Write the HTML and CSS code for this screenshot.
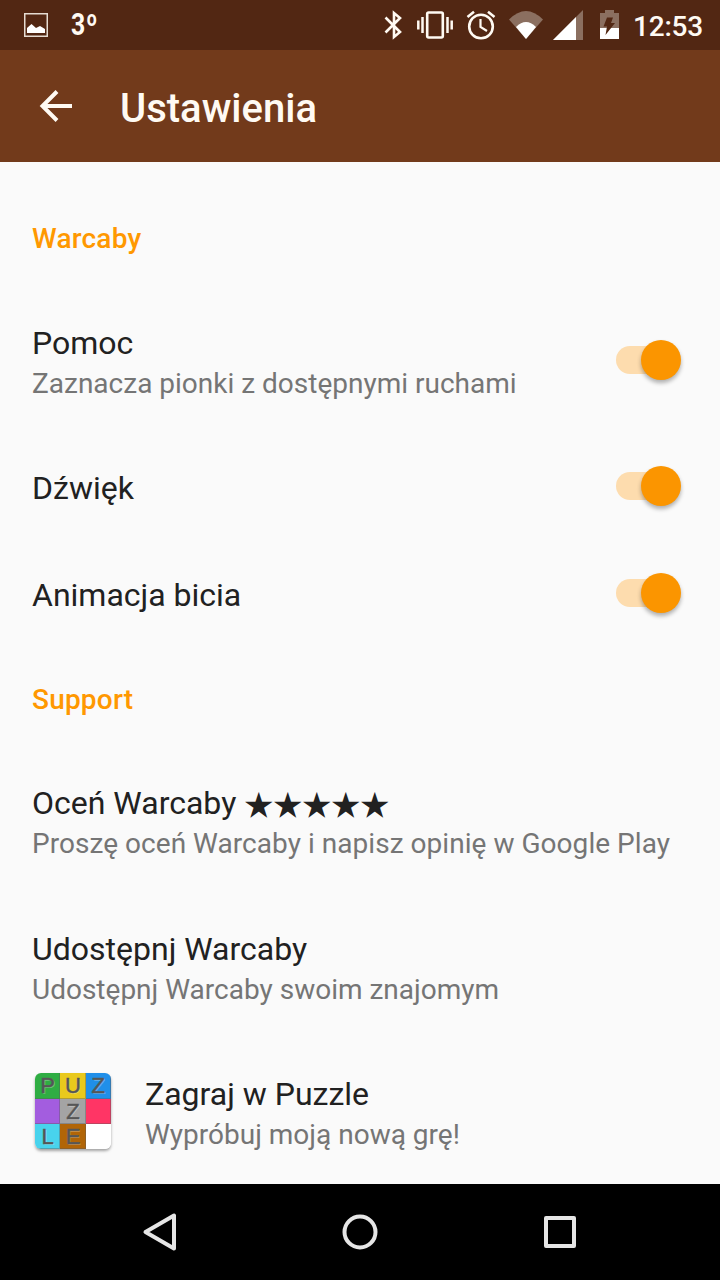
FILE: index.html
```html
<!DOCTYPE html>
<html lang="pl">
<head>
<meta charset="utf-8">
<title>Ustawienia</title>
<link rel="stylesheet" href="styles.css">
</head>
<body>
<div class="screen">
  <div class="statusbar">
    <svg class="status-picture" width="24" height="24" viewBox="0 0 24 24"><rect x=".75" y=".75" width="22.5" height="22.5" fill="none" stroke="#e6dcd2" stroke-width="1.5"/><path d="M3 20v-5l4.500-4 4.500 4 4-2 5 3v4z" fill="#fff"/></svg>
    <span class="temp">3<span class="degree">o</span></span>
    <svg class="status-icons" width="250" height="50" viewBox="370 0 250 50">
      <g fill="none" stroke="#fffaf3" stroke-width="2.600">
        <path d="M385.500 17.500 400 32l-6 5V13l6 5-14.500 14.500"/>
        <rect x="427.200" y="12.500" width="15.600" height="25" rx="1.500"/>
        <path d="M422.500 17v16M447.500 17v16M418.300 20.500v9M451.700 20.500v9" stroke-width="2.500"/>
        <circle cx="481" cy="26.500" r="11.800"/>
        <path d="M480.500 19v8l6.500 4" stroke-width="2.200"/>
        <path d="m467.500 17 6.500-5.200M494.500 17l-6.500-5.200"/>
      </g>
      <path d="M509 19.500q17-17 34 0L526 39z" fill="#8b6f60"/>
      <path d="M516 27q10-10 20 0L526 39z" fill="#fff"/>
      <path d="M583 10v30h-30z" fill="#8b6f60"/>
      <path d="M576 17v23h-23z" fill="#fff"/>
      <path d="M600 13h5v-3h9v3h5v16h-19z" fill="#8b6f60"/>
      <path d="M600 28h19v11h-19z" fill="#fff"/>
      <path d="M607 17.500h6l-2 5.500h4L605.500 35l1.500-8.500h-3.500z" fill="#522713"/>
    </svg>
    <span class="clock">12:53</span>
  </div>
  <header class="appbar">
    <svg class="back" width="34" height="34" viewBox="0 0 34 34"><path d="M33 17H4M18 2.500 3.500 17 18 31.500" fill="none" stroke="#fffaf3" stroke-width="4"/></svg>
    <h1 class="appbar-title">Ustawienia</h1>
  </header>
  <main class="list">
    <h2 class="category">Warcaby</h2>
    <div class="row">
      <div class="text"><div class="title">Pomoc</div><div class="summary">Zaznacza pionki z dostępnymi ruchami</div></div>
      <div class="switch"><div class="thumb"></div></div>
    </div>
    <div class="row single">
      <div class="text"><div class="title">Dźwięk</div></div>
      <div class="switch"><div class="thumb"></div></div>
    </div>
    <div class="row single">
      <div class="text"><div class="title">Animacja bicia</div></div>
      <div class="switch"><div class="thumb"></div></div>
    </div>
    <h2 class="category">Support</h2>
    <div class="row">
      <div class="text"><div class="title">Oceń Warcaby <span class="stars">★★★★★</span></div><div class="summary summary-long">Proszę oceń Warcaby i napisz opinię w Google Play</div></div>
    </div>
    <div class="row">
      <div class="text"><div class="title">Udostępnj Warcaby</div><div class="summary">Udostępnj Warcaby swoim znajomym</div></div>
    </div>
    <div class="row">
      <div class="puzzle">
        <span class="tile green">P</span><span class="tile yellow">U</span><span class="tile blue">Z</span>
        <span class="tile purple"></span><span class="tile gray">Z</span><span class="tile red"></span>
        <span class="tile cyan">L</span><span class="tile brown">E</span><span class="tile white"></span>
      </div>
      <div class="text"><div class="title">Zagraj w Puzzle</div><div class="summary">Wypróbuj moją nową grę!</div></div>
    </div>
  </main>
  <nav class="navbar">
    <svg width="40" height="40" viewBox="0 0 40 40"><path d="M34 3.500v33L5.500 20z"/></svg>
    <svg width="40" height="40" viewBox="0 0 40 40"><circle cx="20" cy="20" r="15.500"/></svg>
    <svg width="40" height="40" viewBox="0 0 40 40"><rect x="6" y="6" width="28" height="28"/></svg>
  </nav>
</div>
</body>
</html>
```
FILE: styles.css
```css
* { box-sizing: border-box; }
body { margin: 0; font-family: Roboto, "Noto Sans", sans-serif; }
.screen { width: 720px; height: 1280px; display: flex; flex-direction: column; overflow: hidden; background: #fafafa; }
.statusbar { height: 50px; flex: none; background: #522713; color: #fffaf3; display: flex; align-items: center; padding: 0 16px 0 24px; }
.temp { margin-left: 23px; font-size: 31px; font-weight: 700; line-height: 50px; display: flex; transform: scaleX(.8); transform-origin: left; }
.degree { font-size: 22px; line-height: 37px; margin-left: 2px; }
.status-icons { margin-left: auto; flex: none; }
.clock { width: 70px; margin-left: 14px; padding-top: 3px; font-size: 28px; font-weight: 500; line-height: 50px; letter-spacing: -.2px; text-indent: -1px; white-space: nowrap; }
.appbar { height: 112px; flex: none; background: #723a1b; display: flex; align-items: center; padding-left: 39px; }
.back { flex: none; }
.appbar-title { margin: 6px 0 0 47px; font-size: 40px; line-height: 48px; font-weight: 500; color: #fffaf3; }
.list { height: 1022px; flex: none; padding-top: 26px; overflow: hidden; }
.category { margin: 0; height: 101px; padding-left: 32px; font-size: 28px; line-height: 101px; font-weight: 500; letter-spacing: .2px; color: #ff9800; }
.row { height: 145.500px; display: flex; align-items: center; padding: 0 39px 0 32px; }
.text { flex: 1; padding-top: 4px; white-space: nowrap; }
.single { height: 107px; }
.single .text { padding-top: 0; }
.title { font-size: 32px; line-height: 40px; color: #212121; }
.summary { font-size: 28px; line-height: 42px; color: #757575; }
.summary-long { letter-spacing: .04px; }
.stars { font-family: "Noto Sans CJK JP", "DejaVu Sans", sans-serif; font-size: 29px; line-height: 1; vertical-align: -2px; }
.switch { width: 66px; height: 40px; flex: none; display: flex; justify-content: flex-end; align-items: center; margin-bottom: 4px; }
.switch::before { content: ""; width: 46px; height: 28px; margin-right: -21px; border-radius: 14px; background: #fddcae; }
.thumb { width: 40px; height: 40px; border-radius: 50%; background: #fb9500; box-shadow: 0 3px 4px rgba(0, 0, 0, .3); z-index: 1; }
.puzzle { width: 76px; height: 76px; margin: 0 34px 4px 3px; flex: none; display: grid; grid-template: repeat(3, 1fr) / repeat(3, 1fr); border-radius: 6px; overflow: hidden; box-shadow: 0 2px 3px rgba(0, 0, 0, .35); }
.tile { display: flex; align-items: center; justify-content: center; font-size: 22px; font-weight: 400; line-height: 25px; color: #555; font-family: "Liberation Sans", sans-serif; -webkit-text-stroke: .5px #5b5b5b; text-shadow: 1px 1px 0 rgba(255, 255, 255, .3); box-shadow: inset -1px -1px 0 rgba(90, 90, 90, .4); }
.green { background: #2fad43; }
.yellow { background: #e9c91c; }
.blue { background: #208fe9; }
.purple { background: #a35ddf; }
.gray { background: #a4a4a4; }
.red { background: #ff3565; }
.cyan { background: #48d3ed; }
.brown { background: #b16507; }
.white { background: #fff; box-shadow: none; }
.navbar { height: 96px; flex: none; background: #000; display: flex; align-items: center; justify-content: space-between; padding: 0 140px; }
.navbar svg { fill: none; stroke: #e6e6e6; stroke-width: 4; stroke-linejoin: round; }
```
